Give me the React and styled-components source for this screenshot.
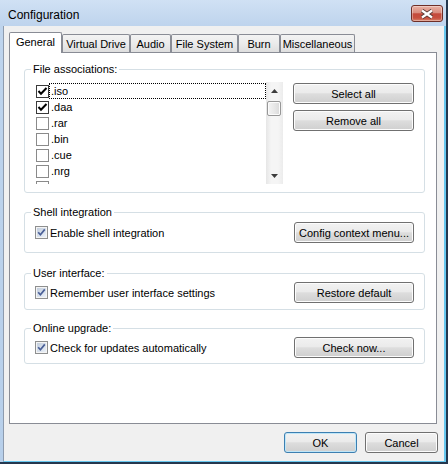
import React from "react";
import styled, { createGlobalStyle } from "styled-components";

const GlobalStyle = createGlobalStyle`
  html, body {
    margin: 0;
    padding: 0;
    background: #fff;
  }
  body {
    font-family: "Liberation Sans", Arial, sans-serif;
    font-size: 11px;
    color: #000;
  }
  * {
    box-sizing: border-box;
  }
`;

const EXTENSIONS = [
  { ext: ".iso", checked: true },
  { ext: ".daa", checked: true },
  { ext: ".rar", checked: false },
  { ext: ".bin", checked: false },
  { ext: ".cue", checked: false },
  { ext: ".nrg", checked: false },
  { ext: ".ape", checked: false },
];

const TABS = [
  { label: "General", width: 53 },
  { label: "Virtual Drive", width: 68 },
  { label: "Audio", width: 41 },
  { label: "File System", width: 67 },
  { label: "Burn", width: 42 },
  { label: "Miscellaneous", width: 75 },
];

const CloseGlyph = () => (
  <svg width="14" height="10" viewBox="0 0 14 10">
    <path d="M2 1.5 L12 8.5 M12 1.5 L2 8.5" stroke="#5a3a36" strokeWidth="4" />
    <path d="M2 1.5 L12 8.5 M12 1.5 L2 8.5" stroke="#fff" strokeWidth="2.2" />
  </svg>
);

const FlatCheck = ({ checked }) => (
  <FlatBox $checked={checked}>
    {checked && (
      <svg width="11" height="11" viewBox="0 0 11 11">
        <path d="M1.5 5 L4 7.8 L9.5 2" fill="none" stroke="#000" strokeWidth="2" />
      </svg>
    )}
  </FlatBox>
);

const ThemedCheck = () => (
  <svg width="13" height="13" viewBox="0 0 13 13">
    <defs>
      <linearGradient id="chkFill" x1="0" y1="0" x2="1" y2="1">
        <stop offset="0" stopColor="#c3cedd" />
        <stop offset="1" stopColor="#eaf0f8" />
      </linearGradient>
    </defs>
    <rect x="0.5" y="0.5" width="12" height="12" fill="#f4f4f4" stroke="#8e8f8f" />
    <rect x="2" y="2" width="9" height="9" fill="url(#chkFill)" />
    <path d="M3.2 6.3 L5.4 8.8 L9.8 3.4" fill="none" stroke="#4a5f97" strokeWidth="1.7" />
  </svg>
);

const Arrow = ({ down }) => (
  <svg width="7" height="4" viewBox="0 0 7 4">
    <polygon points={down ? "0,0 7,0 3.5,4" : "0,4 7,4 3.5,0"} fill="#3d3d3d" />
  </svg>
);

const CheckOption = ({ label, button }) => (
  <OptionRow>
    <CheckLabel>
      <ThemedCheck />
      <span>{label}</span>
    </CheckLabel>
    <Button>{button}</Button>
  </OptionRow>
);

const App = () => {
  return (
    <>
      <GlobalStyle />
      <Window>
        <TitleBar>
          <Title>Configuration</Title>
          <CloseButton>
            <CloseGlyph />
          </CloseButton>
        </TitleBar>

        <Client>
          <TabStrip>
            {TABS.map((tab, i) => (
              <Tab key={tab.label} $w={tab.width} $active={i === 0}>
                {tab.label}
              </Tab>
            ))}
          </TabStrip>

          <Panel>
            <Group $mt={0} $pt={6} $pb={8}>
              <Legend>File associations:</Legend>
              <AssocRow>
                <ListBox>
                  <ListItems>
                    {EXTENSIONS.map((item, i) => (
                      <ListRow key={item.ext}>
                        <FlatCheck checked={item.checked} />
                        <ItemText $focused={i === 0}>{item.ext}</ItemText>
                      </ListRow>
                    ))}
                  </ListItems>
                  <ScrollBar>
                    <ScrollArrow>
                      <Arrow />
                    </ScrollArrow>
                    <Track>
                      <Thumb />
                    </Track>
                    <ScrollArrow>
                      <Arrow down />
                    </ScrollArrow>
                  </ScrollBar>
                </ListBox>
                <ButtonColumn>
                  <Button $w={121}>Select all</Button>
                  <Button $w={121}>Remove all</Button>
                </ButtonColumn>
              </AssocRow>
            </Group>

            <Group $mt={13} $pt={3} $pb={9}>
              <Legend>Shell integration</Legend>
              <CheckOption label="Enable shell integration" button="Config context menu..." />
            </Group>

            <Group $mt={14} $pt={2} $pb={6}>
              <Legend>User interface:</Legend>
              <CheckOption label="Remember user interface settings" button="Restore default" />
            </Group>

            <Group $mt={12} $pt={2} $pb={5}>
              <Legend>Online upgrade:</Legend>
              <CheckOption label="Check for updates automatically" button="Check now..." />
            </Group>
          </Panel>

          <Footer>
            <Button $w={73} $default>
              OK
            </Button>
            <Button $w={73}>Cancel</Button>
          </Footer>
        </Client>
      </Window>
    </>
  );
};

const Window = styled.div`
  width: 448px;
  height: 464px;
  display: flex;
  flex-direction: column;
  padding-left: 3px;
  background: linear-gradient(#d0e1f4 0px, #bed4ed 26px, #b7cfea 100%);
  border-right: 2px solid #24374e;
  border-bottom: 2px solid #24374e;
`;

const TitleBar = styled.div`
  flex: none;
  height: 26px;
  display: flex;
  align-items: flex-start;
  justify-content: space-between;
  padding-left: 5px;
`;

const Title = styled.span`
  font-size: 12px;
  line-height: 26px;
  padding-top: 2px;
  color: #000;
`;

const CloseButton = styled.div`
  width: 32px;
  height: 17px;
  margin: 5px 3px 0 0;
  display: flex;
  align-items: center;
  justify-content: center;
  border: 1px solid #6e2e27;
  border-radius: 3px;
  background: linear-gradient(
    #eab1a4 0%,
    #d98c7e 45%,
    #c4493b 52%,
    #c8503f 80%,
    #d8846c 100%
  );
  box-shadow: inset 0 0 0 1px rgba(255, 255, 255, 0.35);
`;

const Client = styled.div`
  flex: 1;
  display: flex;
  flex-direction: column;
  background: #f0f0f0;
  border-left: 1px solid #8d9bae;
  border-right: 2px solid #67c8ef;
  border-bottom: 1px solid #67c8ef;
  padding: 6px 7px 8px 5px;
`;

const TabStrip = styled.div`
  flex: none;
  height: 20px;
  display: flex;
  align-items: flex-end;
`;

const Tab = styled.div`
  position: relative;
  z-index: ${(p) => (p.$active ? 1 : 0)};
  width: ${(p) => p.$w}px;
  height: ${(p) => (p.$active ? 21 : 18)}px;
  margin-bottom: ${(p) => (p.$active ? -1 : 0)}px;
  padding-bottom: ${(p) => (p.$active ? 2 : 0)}px;
  display: flex;
  align-items: center;
  justify-content: center;
  border: 1px solid #898c95;
  border-bottom: none;
  border-radius: 2px 2px 0 0;
  background: ${(p) =>
    p.$active ? "#fff" : "linear-gradient(#f3f3f3, #ebebeb 50%, #dedede)"};
  font-size: 11px;
  white-space: nowrap;
`;

const Panel = styled.div`
  flex: none;
  height: 372px;
  display: flex;
  flex-direction: column;
  padding: 10px 11px 0 14px;
  border: 1px solid #898c95;
  background: #fff;
`;

const Group = styled.fieldset`
  margin: ${(p) => p.$mt}px 0 0 0;
  padding: ${(p) => p.$pt}px 10px ${(p) => p.$pb}px 10px;
  min-width: 0;
  border: 1px solid #d5dfe5;
  border-radius: 3px;
`;

const Legend = styled.legend`
  margin-left: -4px;
  padding: 0 2px;
  font-size: 11px;
  line-height: 13px;
  color: #000;
`;

const AssocRow = styled.div`
  display: flex;
  gap: 10px;
`;

const ListBox = styled.div`
  width: 248px;
  height: 102px;
  display: flex;
  overflow: hidden;
  background: #fff;
`;

const ListItems = styled.div`
  flex: 1;
  padding: 1px 0 0 1px;
`;

const ListRow = styled.div`
  height: 16px;
  display: flex;
  align-items: center;
`;

const FlatBox = styled.span`
  width: 13px;
  height: 13px;
  flex: none;
  display: flex;
  align-items: center;
  justify-content: center;
  border: 1px solid ${(p) => (p.$checked ? "#3a3a3a" : "#8a8a8a")};
  background: #fff;
`;

const ItemText = styled.span`
  flex: 1;
  height: 16px;
  line-height: 14px;
  padding-left: 1px;
  border: 1px dotted ${(p) => (p.$focused ? "#000" : "transparent")};
  font-size: 11px;
`;

const ScrollBar = styled.div`
  width: 17px;
  flex: none;
  display: flex;
  flex-direction: column;
  background: linear-gradient(to right, #e6e6e6, #f5f5f5 30%, #f5f5f5 70%, #ececec);
`;

const ScrollArrow = styled.div`
  height: 17px;
  flex: none;
  display: flex;
  align-items: center;
  justify-content: center;
`;

const Track = styled.div`
  flex: 1;
  padding: 2px 2px 0 1px;
`;

const Thumb = styled.div`
  height: 15px;
  border: 1px solid #979797;
  border-radius: 2px;
  background: linear-gradient(to right, #f3f3f3, #e8e8e8 50%, #d9d9d9);
  box-shadow: inset 0 0 0 1px #fbfbfb;
`;

const ButtonColumn = styled.div`
  display: flex;
  flex-direction: column;
  gap: 6px;
  margin-top: 1px;
`;

const Button = styled.button`
  width: ${(p) => p.$w || 120}px;
  height: 21px;
  padding: 0;
  font-family: "Liberation Sans", Arial, sans-serif;
  font-size: 11px;
  color: #000;
  border: 1px solid ${(p) => (p.$default ? "#3c7fb1" : "#707070")};
  border-radius: 3px;
  background: linear-gradient(#f2f2f2 0%, #ebebeb 45%, #dddddd 52%, #cfcfcf 100%);
  box-shadow: inset 0 0 0 1px ${(p) => (p.$default ? "#bfe6f8" : "#fcfcfc")};
`;

const OptionRow = styled.div`
  height: 21px;
  display: flex;
  align-items: center;
  justify-content: space-between;
`;

const CheckLabel = styled.label`
  display: flex;
  align-items: center;
  gap: 2px;
  font-size: 11px;
`;

const Footer = styled.div`
  flex: none;
  display: flex;
  justify-content: flex-end;
  gap: 8px;
  margin: 8px -1px 0 0;
`;

export default App;
